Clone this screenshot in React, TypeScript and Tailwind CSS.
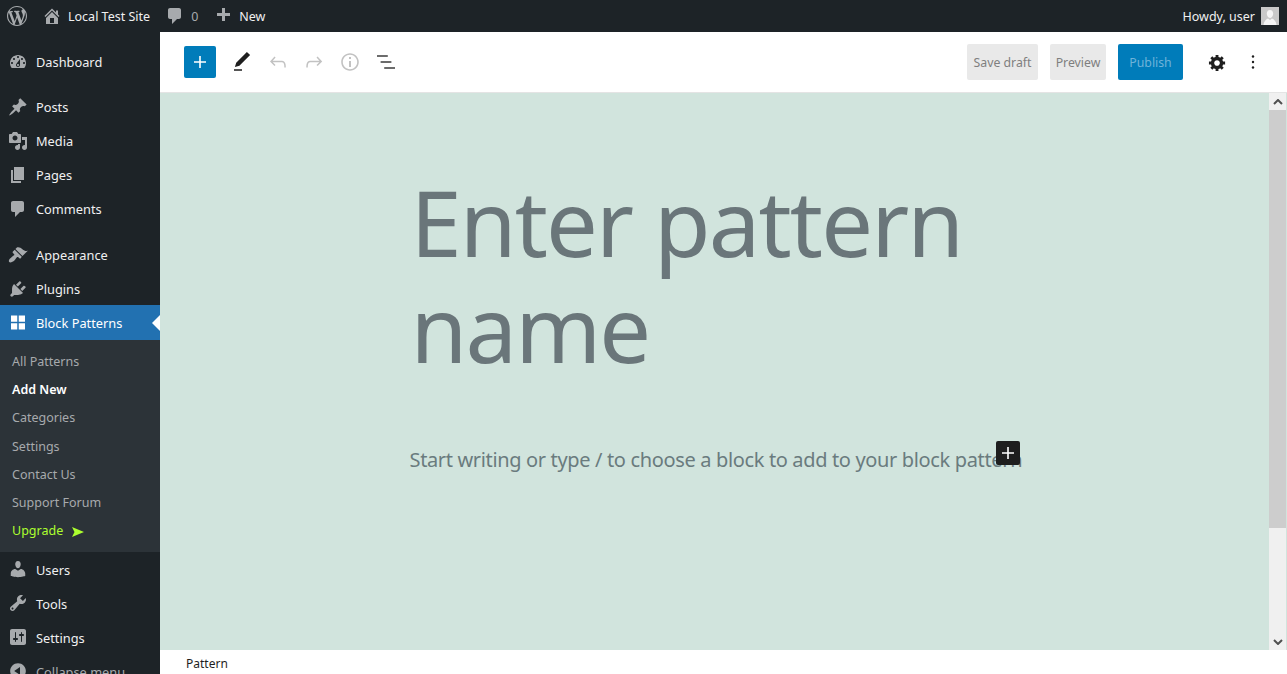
import type { ReactNode } from 'react';

const DASH = {
  logo: 'M20 10c0-5.51-4.49-10-10-10C4.48 0 0 4.49 0 10c0 5.52 4.48 10 10 10 5.51 0 10-4.48 10-10zM7.78 15.37L4.37 6.22c.55-.02 1.17-.08 1.17-.08.5-.06.44-1.13-.06-1.11 0 0-1.45.11-2.37.11-.18 0-.37 0-.58-.01C4.12 2.69 6.87 1.11 10 1.11c2.33 0 4.45.87 6.05 2.34-.68-.11-1.65.39-1.65 1.58 0 .74.45 1.36.9 2.1.35.61.55 1.36.55 2.46 0 1.49-1.4 5-1.4 5l-3.03-8.37c.54-.02.82-.17.82-.17.5-.05.44-1.25-.06-1.22 0 0-1.44.12-2.38.12-.87 0-2.33-.12-2.33-.12-.5-.03-.56 1.2-.06 1.22l.92.08 1.26 3.41zM17.41 10c.24-.64.74-1.87.43-4.25.7 1.29 1.05 2.71 1.05 4.25 0 3.29-1.73 6.24-4.4 7.78.97-2.59 1.94-5.2 2.92-7.78zM6.1 18.09C3.12 16.65 1.11 13.53 1.11 10c0-1.3.23-2.48.72-3.59C3.25 10.3 4.67 14.2 6.1 18.09zm4.03-6.63l2.58 6.98c-.86.29-1.76.45-2.71.45-.79 0-1.57-.11-2.29-.33.81-2.38 1.62-4.74 2.42-7.1z',
  home: 'M16 8.5l1.53 1.53-1.06 1.06L10 4.62l-6.47 6.47-1.06-1.06L10 2.5l4 4v-2h2v4zm-6-2.46l6 5.99V18H4v-5.97zM12 17v-5H8v5h4z',
  comment: 'M5 2h9c1.1 0 2 .9 2 2v7c0 1.1-.9 2-2 2h-2l-5 5v-5H5c-1.1 0-2-.9-2-2V4c0-1.1.9-2 2-2z',
  plus: 'M17 7v3h-5v5H9v-5H4V7h5V2h3v5h5z',
  dashboard: 'M3.76 16h12.48c1.1-1.37 1.76-3.11 1.76-5 0-4.42-3.58-8-8-8s-8 3.58-8 8c0 1.89.66 3.63 1.76 5zM10 4c.55 0 1 .45 1 1s-.45 1-1 1-1-.45-1-1 .45-1 1-1zM6 6c.55 0 1 .45 1 1s-.45 1-1 1-1-.45-1-1 .45-1 1-1zm8 0c.55 0 1 .45 1 1s-.45 1-1 1-1-.45-1-1 .45-1 1-1zm-5.37 5.55L12 7v6c0 1.1-.9 2-2 2s-2-.9-2-2c0-.57.24-1.08.63-1.45zM4 10c.55 0 1 .45 1 1s-.45 1-1 1-1-.45-1-1 .45-1 1-1zm12 0c.55 0 1 .45 1 1s-.45 1-1 1-1-.45-1-1 .45-1 1-1zm-5 3c0-.55-.45-1-1-1s-1 .45-1 1 .45 1 1 1 1-.45 1-1z',
  posts: 'M10.44 3.02l1.82-1.82 6.36 6.35-1.83 1.82c-1.05-.68-2.48-.57-3.41.36l-.75.75c-.92.93-1.04 2.35-.35 3.41l-1.83 1.82-2.41-2.41-2.8 2.79c-.42.42-3.38 2.71-3.8 2.29s1.86-3.39 2.28-3.81l2.79-2.79L4.1 9.36l1.83-1.82c1.05.69 2.48.57 3.4-.36l.75-.75c.93-.92 1.05-2.35.36-3.41z',
  media: 'M13 11V4c0-.55-.45-1-1-1h-1.67L9 1H5L3.67 3H2c-.55 0-1 .45-1 1v7c0 .55.45 1 1 1h10c.55 0 1-.45 1-1zM7 4.5c1.38 0 2.5 1.12 2.5 2.5S8.38 9.5 7 9.5 4.5 8.38 4.5 7 5.62 4.5 7 4.5zM14 6h5v10.5c0 1.38-1.12 2.5-2.5 2.5S14 17.88 14 16.5s1.12-2.5 2.5-2.5c.17 0 .34.02.5.05V9h-3V6zm-4 8.05V13h2v3.5c0 1.38-1.12 2.5-2.5 2.5S7 17.88 7 16.5 8.12 14 9.5 14c.17 0 .34.02.5.05z',
  pages: 'M6 15V2h10v13H6zm-1 1h8v2H3V5h2v11z',
  appearance: 'M14.48 11.06L7.41 3.99l1.5-1.5c.5-.56 2.3-.47 3.51.32 1.21.8 1.43 1.28 2.91 2.1 1.18.64 2.45 1.26 4.45.85zm-.71.71L6.7 4.7 4.93 6.47c-.39.39-.39 1.02 0 1.41l1.06 1.06c.39.39.39 1.03 0 1.42-.6.6-1.43 1.11-2.21 1.69-.35.26-.7.53-1.01.84C1.43 13.23.18 16.03 1.2 17.05s3.82-.23 5.18-1.57c.31-.31.58-.66.84-1.01.58-.78 1.09-1.61 1.69-2.21.39-.39 1.03-.39 1.42 0l1.06 1.06c.39.39 1.02.39 1.41 0z',
  plugins: 'M13.11 4.36L9.87 7.6 8 5.73l3.24-3.24c.35-.34 1.05-.2 1.56.32.52.51.66 1.21.31 1.55zm-8 1.77l.91-1.12 9.01 9.01-1.19.84c-.71.71-2.63 1.16-3.82 1.16H6.14L4.9 17.26c-.59.59-1.54.59-2.12 0-.59-.58-.59-1.53 0-2.12l1.24-1.24v-3.88c0-1.13.4-3.19 1.09-3.89zm7.26 3.97l3.24-3.24c.34-.35 1.04-.21 1.55.31.52.51.66 1.21.31 1.55l-3.24 3.25z',
  blocks: 'M3 2.500h6.250v6.250H3zM10.750 2.500H17v6.250h-6.250zM3 10.250h6.250v6.250H3zM10.750 10.250H17v6.250h-6.250z',
  users: 'M10 9.25c-2.27 0-2.73-3.44-2.73-3.44C7 4.02 7.82 2 9.97 2c2.16 0 2.98 2.02 2.71 3.81 0 0-.41 3.44-2.68 3.44zm0 2.57L12.72 10c2.39 0 4.52 2.33 4.52 4.53v2.49s-3.65 1.13-7.24 1.13c-3.65 0-7.24-1.13-7.24-1.13v-2.49c0-2.25 1.94-4.48 4.47-4.48z',
  tools: 'M16.68 9.77c-1.34 1.34-3.3 1.67-4.95.99l-5.41 6.52c-.99.99-2.59.99-3.58 0s-.99-2.59 0-3.57l6.52-5.42c-.68-1.65-.35-3.61.99-4.95 1.28-1.28 3.12-1.62 4.72-1.06l-2.89 2.89 2.82 2.82 2.86-2.87c.53 1.58.18 3.39-1.08 4.65zM3.81 16.21c.4.39 1.04.39 1.43 0 .4-.4.4-1.04 0-1.43-.39-.4-1.03-.4-1.43 0-.39.39-.39 1.03 0 1.43z',
  settings: 'M18 16V4c0-1.1-.9-2-2-2H4c-1.1 0-2 .9-2 2v12c0 1.1.9 2 2 2h12c1.1 0 2-.9 2-2zM8 11h1c.55 0 1 .45 1 1s-.45 1-1 1H8v1.5c0 .28-.22.5-.5.5s-.5-.22-.5-.5V13H6c-.55 0-1-.45-1-1s.45-1 1-1h1V5.5c0-.28.22-.5.5-.5s.5.22.5.5V11zm5-2h-1c-.55 0-1-.45-1-1s.45-1 1-1h1V5.5c0-.28.22-.5.5-.5s.5.22.5.5V7h1c.55 0 1 .45 1 1s-.45 1-1 1h-1v5.5c0 .28-.22.5-.5.5s-.5-.22-.5-.5V9z',
  collapse: 'M10 2.16c4.33 0 7.84 3.51 7.84 7.84s-3.51 7.84-7.84 7.84S2.16 14.33 2.16 10 5.71 2.16 10 2.16zm2 11.72V6.12L6.18 9.97z',
  cog: 'M18 12h-2.18c-.17.7-.44 1.35-.81 1.93l1.54 1.54-2.1 2.1-1.54-1.54c-.58.36-1.23.63-1.91.79V19H8v-2.18c-.68-.16-1.33-.43-1.91-.79l-1.54 1.54-2.12-2.12 1.54-1.54c-.36-.58-.63-1.23-.79-1.91H1V9.03h2.17c.16-.7.44-1.35.8-1.94L2.43 5.55l2.1-2.1 1.54 1.54c.58-.37 1.24-.64 1.93-.81V2h3v2.18c.68.16 1.33.43 1.91.79l1.54-1.54 2.12 2.12-1.54 1.54c.36.59.64 1.24.8 1.94H18V12zm-8.5 1.5c1.66 0 3-1.34 3-3s-1.34-3-3-3-3 1.34-3 3 1.34 3 3 3z',
};

const BLOCK = {
  plus: 'M18 11.2h-5.2V6h-1.6v5.2H6v1.6h5.2V18h1.6v-5.2H18z',
  edit: 'M20.1 5.1L16.9 2 6.2 12.7l-1.3 4.4 4.5-1.3L20.1 5.1zM4 20.8h8v-1.5H4v1.5z',
  undo: 'M18.3 11.7c-.6-.6-1.4-.9-2.3-.9H6.7l2.9-3.3-1.1-1-4.5 5L8.5 16l1-1-2.7-2.7H16c.5 0 .9.2 1.3.5 1 1 1 3.4 1 4.5v.3h1.5v-.2c0-1.5 0-4.3-1.5-5.7z',
  redo: 'M15.6 6.5l-1.1 1 2.9 3.3H8c-.9 0-1.7.3-2.3.9-1.4 1.5-1.4 4.2-1.4 5.6v.2h1.5v-.3c0-1.1 0-3.5 1-4.5.3-.3.7-.5 1.3-.5h9.2L14.5 15l1.1 1.1 4.6-4.6-4.6-5z',
  info: 'M12 3.2c-4.8 0-8.8 3.9-8.8 8.8 0 4.8 3.9 8.8 8.8 8.8 4.8 0 8.8-3.9 8.8-8.8 0-4.8-4-8.8-8.8-8.8zm0 16c-4 0-7.2-3.3-7.2-7.2C4.8 8 8 4.8 12 4.8s7.2 3.3 7.2 7.2c0 4-3.2 7.2-7.2 7.2zM11 17h2v-6h-2v6zm0-8h2V7h-2v2z',
  list: 'M13.8 5.2H3v1.5h10.8V5.2zm-3.6 12v1.5H21v-1.5H10.2zm7.2-6H6.6v1.5h10.8v-1.5z',
};

function Dash({ d, className }: { d: string; className: string }) {
  return (
    <svg viewBox="0 0 20 20" className={className} fill="currentColor" aria-hidden>
      <path d={d} />
    </svg>
  );
}

function Block({ d, className }: { d: string; className: string }) {
  return (
    <svg viewBox="0 0 24 24" className={className} fill="currentColor" aria-hidden>
      <path d={d} />
    </svg>
  );
}

function MenuItem({ icon, label, active, muted }: { icon: string; label: string; active?: boolean; muted?: boolean }) {
  return (
    <div className={`relative flex items-center ${active ? '-mt-px h-[35px] bg-[#2271b1] text-white' : muted ? 'h-[34px] text-[#a7aaad]' : 'h-[34px] text-[#f0f0f1]'}`}>
      <div className={`flex w-[36px] justify-center ${active ? 'text-white' : 'text-[#a7aaad]'}`}>
        <Dash d={icon} className="h-5 w-5" />
      </div>
      <span className="pt-[2px]">{label}</span>
      {active && <span className="absolute right-0 top-[10px] h-0 w-0 border-y-[8px] border-r-[8px] border-y-transparent border-r-white" />}
    </div>
  );
}

function SubItem({ children, className }: { children: ReactNode; className: string }) {
  return <div className={`flex h-[28.2px] items-center pl-3 text-[12.5px] ${className}`}>{children}</div>;
}

function Sidebar() {
  return (
    <aside className="w-[160px] shrink-0 bg-[#1d2327] pt-[13px] text-[12.8px]">
      <MenuItem icon={DASH.dashboard} label="Dashboard" />
      <div className="mt-[11px]">
        <MenuItem icon={DASH.posts} label="Posts" />
        <MenuItem icon={DASH.media} label="Media" />
        <MenuItem icon={DASH.pages} label="Pages" />
        <MenuItem icon={DASH.comment} label="Comments" />
      </div>
      <div className="mt-[12px]">
        <MenuItem icon={DASH.appearance} label="Appearance" />
        <MenuItem icon={DASH.plugins} label="Plugins" />
        <MenuItem icon={DASH.blocks} label="Block Patterns" active />
      </div>
      <div className="bg-[#2c3338] pb-[6.6px] pt-[8.4px]">
        <SubItem className="text-[#a7aaad]">All Patterns</SubItem>
        <SubItem className="font-semibold text-white">Add New</SubItem>
        <SubItem className="text-[#a7aaad]">Categories</SubItem>
        <SubItem className="text-[#a7aaad]">Settings</SubItem>
        <SubItem className="text-[#a7aaad]">Contact Us</SubItem>
        <SubItem className="text-[#a7aaad]">Support Forum</SubItem>
        <SubItem className="text-[#adff2f]">
          Upgrade
          <svg viewBox="0 0 12 10" className="ml-[9px] h-[10px] w-[12px]" fill="currentColor" aria-hidden>
            <path d="M0 0l12 5-12 5 2.5-5z" />
          </svg>
        </SubItem>
      </div>
      <div>
        <MenuItem icon={DASH.users} label="Users" />
        <MenuItem icon={DASH.tools} label="Tools" />
        <MenuItem icon={DASH.settings} label="Settings" />
        <MenuItem icon={DASH.collapse} label="Collapse menu" muted />
      </div>
    </aside>
  );
}

function TopBar() {
  return (
    <header className="flex h-[32px] shrink-0 items-center justify-between bg-[#1d2327] text-[12.5px] text-[#f0f0f1]">
      <div className="flex items-center">
        <Dash d={DASH.logo} className="ml-[7px] h-5 w-5 text-[#a7aaad]" />
        <Dash d={DASH.home} className="ml-[15px] h-5 w-5 text-[#a7aaad]" />
        <span className="ml-[6px] pt-[3px]">Local Test Site</span>
        <Dash d={DASH.comment} className="ml-[15px] h-5 w-5 text-[#a7aaad]" />
        <span className="ml-[6px] pt-[3px] text-[#a7aaad]">0</span>
        <Dash d={DASH.plus} className="ml-[15px] h-5 w-5 text-[#a7aaad]" />
        <span className="ml-[6px] pt-[3px]">New</span>
      </div>
      <div className="mr-[8px] flex items-center gap-[6px]">
        <span className="pt-[3px]">Howdy, user</span>
        <div className="flex h-[18px] w-[18px] items-end justify-center overflow-hidden bg-[#c9c9c9]">
          <svg viewBox="0 0 18 18" className="h-[18px] w-[18px]" fill="#f5f5f5" aria-hidden>
            <path d="M9 3c2 0 3.2 1.5 3.2 3.6S11 11 9 11 5.800 8.700 5.800 6.600 7 3 9 3zM2.500 18c.3-3.500 2.500-6 4.500-6.500L9 13l2-1.500c2 .5 4.200 3 4.500 6.500z" />
          </svg>
        </div>
      </div>
    </header>
  );
}

function EditorToolbar() {
  return (
    <div className="flex h-[61px] shrink-0 items-center border-b border-[#e4e4e4] bg-white">
      <div className="ml-[24px] flex h-[32px] w-[32px] items-center justify-center rounded-[2px] bg-[#007cba] text-white">
        <Block d={BLOCK.plus} className="h-6 w-6" />
      </div>
      <Block d={BLOCK.edit} className="ml-[14px] h-6 w-6 text-[#1e1e1e]" />
      <Block d={BLOCK.undo} className="ml-[12px] h-6 w-6 text-[#c2c2c2]" />
      <Block d={BLOCK.redo} className="ml-[12px] h-6 w-6 text-[#c2c2c2]" />
      <Block d={BLOCK.info} className="ml-[12px] h-6 w-6 text-[#c2c2c2]" />
      <Block d={BLOCK.list} className="ml-[12px] h-6 w-6 text-[#3c3c3c]" />
      <div className="ml-auto flex items-center text-[12.3px]">
        <div className="flex h-[36px] w-[71px] items-center justify-center rounded-[2px] bg-[#e9e9e9] pt-[3px] text-[#7f7f7f]">Save draft</div>
        <div className="ml-[12px] flex h-[36px] w-[56px] items-center justify-center rounded-[2px] bg-[#e9e9e9] pt-[3px] text-[#7f7f7f]">Preview</div>
        <div className="ml-[12px] flex h-[36px] w-[65px] items-center justify-center rounded-[2px] bg-[#007cba] pt-[3px] text-[#6fb3d9]">Publish</div>
        <Dash d={DASH.cog} className="ml-[25px] h-[19px] w-[19px] text-[#1e1e1e]" />
        <svg viewBox="0 0 24 24" className="ml-[14px] mr-[22px] h-6 w-6" fill="#1e1e1e" aria-hidden>
          <circle cx="12" cy="6.500" r="1.200" />
          <circle cx="12" cy="12" r="1.200" />
          <circle cx="12" cy="17.500" r="1.200" />
        </svg>
      </div>
    </div>
  );
}

function Scrollbar() {
  return (
    <div className="mr-px flex w-[17px] shrink-0 flex-col bg-[#f0f0f0]">
      <div className="flex h-[17px] items-center justify-center text-[#505050]">
        <svg viewBox="0 0 10 6" className="h-[6px] w-[10px]" fill="none" stroke="currentColor" strokeWidth="2" aria-hidden>
          <path d="M1 5l4-4 4 4" />
        </svg>
      </div>
      <div className="h-[418px] bg-[#cdcdcd]" />
      <div className="flex-1" />
      <div className="flex h-[17px] items-center justify-center text-[#505050]">
        <svg viewBox="0 0 10 6" className="h-[6px] w-[10px]" fill="none" stroke="currentColor" strokeWidth="2" aria-hidden>
          <path d="M1 1l4 4 4-4" />
        </svg>
      </div>
    </div>
  );
}

export default function App() {
  return (
    <div className="flex h-[674px] w-[1287px] flex-col overflow-hidden bg-white font-['Noto_Sans','Open_Sans',sans-serif]">
      <TopBar />
      <div className="flex min-h-0 flex-1">
        <Sidebar />
        <main className="flex min-w-0 flex-1 flex-col">
          <EditorToolbar />
          <div className="flex min-h-0 flex-1 bg-[#d1e4dd]">
            <div className="min-w-0 flex-1">
              <div className="mx-auto w-[610px] pt-[76px] text-[#6a767a]">
                <h1 className="pl-px text-[92px] font-normal leading-[106px] tracking-[-1.9px]">Enter pattern name</h1>
                <div className="relative mt-[64px]">
                  <p className="whitespace-nowrap text-[20px] leading-[30px] tracking-[-0.35px] text-[#6a7b7e]">Start writing or type / to choose a block to add to your block pattern</p>
                  <div className="absolute left-[586px] top-[-4px] flex h-6 w-6 items-center justify-center rounded-[2px] bg-[#1e1e1e] text-white">
                    <Block d={BLOCK.plus} className="h-6 w-6" />
                  </div>
                </div>
              </div>
            </div>
            <Scrollbar />
          </div>
          <footer className="flex h-[24px] shrink-0 items-center bg-white pl-[26px] pt-[3px] text-[12px] text-[#1e1e1e]">Pattern</footer>
        </main>
      </div>
    </div>
  );
}
